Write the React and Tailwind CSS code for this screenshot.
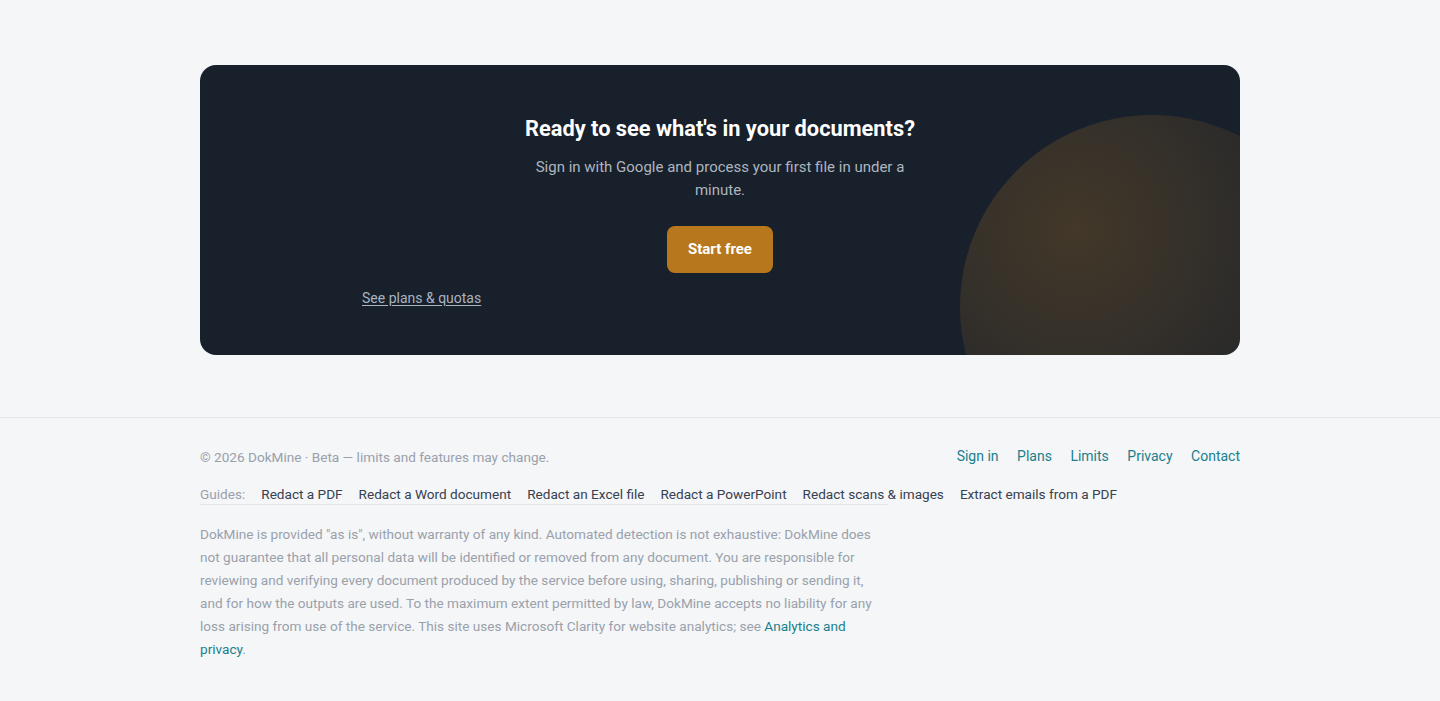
import React from 'react'

const guides = [
    'Redact a PDF',
    'Redact a Word document',
    'Redact an Excel file',
    'Redact a PowerPoint',
    'Redact scans & images',
    'Extract emails from a PDF',
]

const footerLinks = ['Sign in', 'Plans', 'Limits', 'Privacy', 'Contact']

export default function App() {
    return (
        <div className="min-h-screen bg-[#f4f6f8] font-['Roboto',sans-serif]">
            {/* CTA */}
            <section className="pt-[65px] pb-[62px]">
                <div className="relative mx-auto w-[1040px] h-[290px] overflow-hidden rounded-2xl bg-[#18202b]">
                    {/* glow */}
                    <div className="absolute left-[760px] top-[50px] w-[384px] h-[384px] rounded-full bg-[radial-gradient(circle_at_30%_30%,rgba(190,125,35,0.26),rgba(190,125,35,0.10)_55%,rgba(120,110,100,0.08)_100%)]" />

                    <div className="relative flex flex-col items-center pt-[50px]">
                        <h2 className="text-[21.8px] leading-[28px] font-bold text-white">
                            Ready to see what's in your documents?
                        </h2>
                        <p className="mt-[13px] w-[380px] text-center text-[15px] leading-[23px] text-[#aeb5bf]">
                            Sign in with Google and process your first file in under a minute.
                        </p>
                        <button className="mt-[24px] h-[47px] px-[21px] rounded-lg bg-[#b7771c] text-[15px] font-bold text-white">
                            Start free
                        </button>
                        <a href="#" className="mt-[15px] self-start ml-[162px] text-[14px] leading-[20px] text-[#aab3c0] underline underline-offset-2">
                            See plans &amp; quotas
                        </a>
                    </div>
                </div>
            </section>

            {/* Footer */}
            <footer className="border-t border-[#e3e7ec] pt-[27px] pb-[40px]">
                <div className="mx-auto w-[1040px]">
                    <div className="flex items-center justify-between">
                        <p className="pt-[2px] text-[13.6px] leading-[20px] text-[#9aa1ab]">
                            © 2026 DokMine · Beta — limits and features may change.
                        </p>
                        <nav className="flex items-center gap-[18.5px]">
                            {footerLinks.map((l) => (
                                <a key={l} href="#" className="text-[14px] leading-[20px] text-[#1a7f8c]">
                                    {l}
                                </a>
                            ))}
                        </nav>
                    </div>

                    <div className="mt-[17px] w-[688px] flex items-center gap-4 whitespace-nowrap border-b border-[#e3e7ec] text-[13.6px] leading-[20px]">
                        <span className="text-[#9aa1ab]">Guides:</span>
                        {guides.map((g) => (
                            <a key={g} href="#" className="text-[#374151]">
                                {g}
                            </a>
                        ))}
                    </div>

                    <p className="mt-[18px] w-[680px] text-[13.6px] leading-[23px] text-[#9aa1ab]">
                        DokMine is provided "as is", without warranty of any kind. Automated detection is not exhaustive: DokMine does not guarantee that all personal data will be identified or removed from any document. You are responsible for reviewing and verifying every document produced by the service before using, sharing, publishing or sending it, and for how the outputs are used. To the maximum extent permitted by law, DokMine accepts no liability for any loss arising from use of the service. This site uses Microsoft Clarity for website analytics; see{' '}
                        <a href="#" className="text-[#1a7f8c]">Analytics and privacy</a>.
                    </p>
                </div>
            </footer>
        </div>
    )
}
